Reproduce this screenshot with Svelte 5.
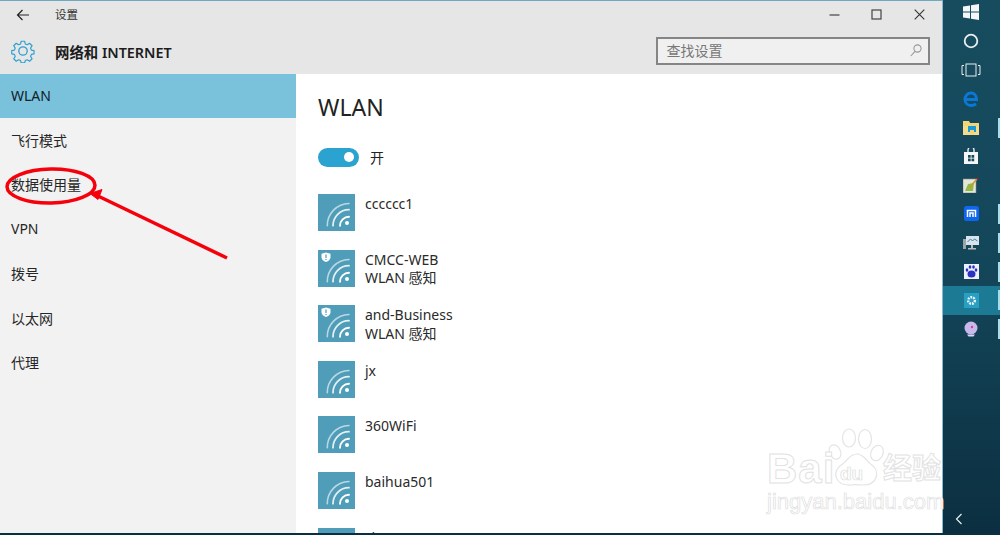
<script>
	const navItems = ['WLAN', '飞行模式', '数据使用量', 'VPN', '拨号', '以太网', '代理'];

	const networks = [
		{ name: 'cccccc1' },
		{ name: 'CMCC-WEB', sub: 'WLAN 感知', secured: true },
		{ name: 'and-Business', sub: 'WLAN 感知', secured: true },
		{ name: 'jx' },
		{ name: '360WiFi' },
		{ name: 'baihua501' },
		{ name: 'zhaoyun' }
	];

	const runningBars = [4, 7, 8, 9, 10, 11];
</script>

<div class="desktop">
	<div class="window">
		<header class="header">
			<div class="titlebar">
				<button class="back" aria-label="返回">
					<svg width="14" height="12" viewBox="0 0 14 12" fill="none" stroke="#222" stroke-width="1.2">
						<path d="M13 6H1.5M6.5 1L1.5 6l5 5" />
					</svg>
				</button>
				<span class="title">设置</span>
				<div class="controls">
					<svg width="11" height="11" viewBox="0 0 11 11" fill="none" stroke="#333" stroke-width="1.1"><path d="M0.5 6h10" /></svg>
					<svg width="11" height="11" viewBox="0 0 11 11" fill="none" stroke="#444" stroke-width="1.2"><rect x="1" y="1" width="9" height="9" /></svg>
					<svg width="11" height="11" viewBox="0 0 11 11" fill="none" stroke="#333" stroke-width="1.1"><path d="M0.7 0.7l9.6 9.6M10.3 0.7l-9.6 9.6" /></svg>
				</div>
			</div>
			<div class="subbar">
				<svg class="gear" width="24" height="24" viewBox="0 0 24 24" fill="none" stroke="#2f9fd0" stroke-width="1.3" stroke-linejoin="round">
					<path d="M10 1.3h4l.6 3 2.2.9 2.6-1.7 2.8 2.8-1.7 2.6.9 2.2 3 .6v3.600l-3 .6-.9 2.2 1.7 2.6-2.8 2.8-2.6-1.7-2.2.9-.6 2.6h-4l-.6-2.6-2.2-.9-2.6 1.7-2.8-2.8 1.7-2.6-.9-2.2-3-.6v-3.6l3-.6.9-2.2-1.7-2.6 2.8-2.8 2.6 1.7 2.2-.9z" transform="translate(1.1 1.1) scale(0.9)" />
					<circle cx="12" cy="12" r="4.2" />
				</svg>
				<span class="section">网络和 INTERNET</span>
				<div class="search">
					<span>查找设置</span>
					<svg width="12" height="13" viewBox="0 0 12 13" fill="none" stroke="#999" stroke-width="1.1">
						<circle cx="7.5" cy="4.5" r="3.6" /><path d="M5 7.3L0.8 12" />
					</svg>
				</div>
			</div>
		</header>

		<div class="body">
			<nav class="sidebar">
				{#each navItems as item, i}
					<div class="nav-item" class:active={i === 0}>{item}</div>
				{/each}
			</nav>

			<main class="content">
				<h1>WLAN</h1>
				<div class="toggle-row">
					<span class="toggle"><span class="knob"></span></span>
					<span>开</span>
				</div>
				<div class="list">
					{#each networks as net}
						<div class="network">
							<div class="net-icon">
								<svg width="37" height="37" viewBox="0 0 37 37" fill="none" stroke="#fff" stroke-linecap="round">
									<path d="M9.3 31.7A22 22 0 0 1 31 9.500" stroke-width="1.6" opacity="0.6" />
									<path d="M15 31.7A16 16 0 0 1 31 15.700" stroke-width="1.8" opacity="0.85" />
									<path d="M22 31.700A9 9 0 0 1 31 22.700" stroke-width="1.900" />
									<circle cx="29" cy="29" r="2" fill="#fff" stroke="none" />
									{#if net.secured}
										<path d="M8 2.500l4.500 1.300v3.400c0 2.400-2 3.800-4.500 4.800-2.500-1-4.500-2.400-4.500-4.800V3.800z" fill="#fff" stroke="none" />
										<path d="M8 4.500v3.500M8 9v1" stroke="#4f9db8" stroke-width="1.200" stroke-linecap="butt" />
									{/if}
								</svg>
							</div>
							<div class="net-text">
								<div>{net.name}</div>
								{#if net.sub}<div>{net.sub}</div>{/if}
							</div>
						</div>
					{/each}
				</div>
			</main>
		</div>

		<!-- annotation drawn over the screenshot -->
		<svg class="annotation" width="240" height="110" viewBox="0 0 240 110" fill="none" stroke="#f5000b">
			<ellipse cx="51" cy="26" rx="44" ry="17" stroke-width="3.500" transform="rotate(-1 51 26)" />
			<path d="M227 98L98 36" stroke-width="3.500" />
			<path d="M90 33.500l12-4-4 10z" fill="#f5000b" stroke-width="1" />
		</svg>
	</div>

	<aside class="taskbar">
		<div class="tb-icon">
			<svg width="16" height="16" viewBox="0 0 16 16" fill="#f4f6f7"><path d="M0 2.500L7 1.400V7.400H0zM8 1.200L16 0V7.400H8zM0 8.400H7V14.500L0 13.500zM8 8.400H16V16L8 14.700z" /></svg>
		</div>
		<div class="tb-icon">
			<svg width="16" height="16" viewBox="0 0 16 16" fill="none" stroke="#e8eef0" stroke-width="1.800"><circle cx="8" cy="8" r="6.300" /></svg>
		</div>
		<div class="tb-icon">
			<svg width="20" height="14" viewBox="0 0 20 14" fill="none" stroke="#e8eef0" stroke-width="1"><rect x="5" y="1" width="10" height="12" /><path d="M3 2.500H1v9h2M17 2.500h2v9h-2" /></svg>
		</div>
		<div class="tb-icon">
			<svg width="16" height="16" viewBox="0 0 16 16" fill="none" stroke="#0a78d7" stroke-width="3"><path d="M2.500 8.500h11C13.500 4.500 11 2 8 2 4.500 2 2 5 2 8.500 2 12 4.500 14.500 8 14.500c2 0 3.500-.5 5-1.500" /></svg>
		</div>
		<div class="tb-icon">
			<svg width="16" height="14" viewBox="0 0 16 14"><path d="M0 0h6l1 2h9v12H0z" fill="#f2d675" /><rect y="5" width="16" height="9" fill="#f5dc8a" /><rect x="5" y="5" width="8" height="6" fill="#1b9ad6" /><rect x="7" y="9" width="4" height="5" fill="#f2d675" /></svg>
		</div>
		<div class="tb-icon">
			<svg width="14" height="16" viewBox="0 0 14 16"><path d="M0 4h14v12H0z" fill="#f4f6f7" /><path d="M4 4V2a3 3 0 0 1 6 0v2" fill="none" stroke="#f4f6f7" stroke-width="1.300" /><path d="M4 7h2.700v2.700H4zM7.500 7h2.700v2.700H7.500zM4 10.500h2.700v2.700H4zM7.500 10.500h2.700v2.700H7.500z" fill="#164a5c" /></svg>
		</div>
		<div class="tb-icon">
			<svg width="16" height="16" viewBox="0 0 16 16"><rect y="2" width="13" height="14" fill="#e4e6d8" stroke="#888" stroke-width="0.600" /><path d="M2 14l3-7 6-1-1 8z" fill="#8dbb4a" /><path d="M6 11l8-9" stroke="#c89a30" stroke-width="1.500" /><circle cx="14.500" cy="1.500" r="1" fill="#a01c2c" /></svg>
		</div>
		<div class="tb-icon">
			<svg width="15" height="15" viewBox="0 0 15 15"><rect width="15" height="15" rx="2.500" fill="#0f67f0" /><path d="M3.500 11V4.500h8V11M6 11V7h3v4" fill="none" stroke="#fff" stroke-width="1.500" /></svg>
		</div>
		<div class="tb-icon">
			<svg width="16" height="15" viewBox="0 0 16 15"><rect x="3" y="1" width="13" height="9" fill="#d8e4ea" /><path d="M4.500 7l3-3 2 2 2-2 3 2" fill="none" stroke="#3b80b0" /><rect x="8" y="10" width="2" height="3" fill="#bbb" /><rect x="5" y="13" width="8" height="1.500" fill="#bbb" /><rect y="4" width="3" height="10" fill="#9aa5a8" /></svg>
		</div>
		<div class="tb-icon">
			<svg width="15" height="15" viewBox="0 0 15 15"><rect width="15" height="15" fill="#eef0fb" /><g fill="#2a32c4"><ellipse cx="3" cy="6" rx="1.300" ry="1.800" /><ellipse cx="6" cy="3" rx="1.300" ry="1.800" /><ellipse cx="9.500" cy="3" rx="1.300" ry="1.800" /><ellipse cx="12" cy="6" rx="1.300" ry="1.800" /><ellipse cx="7.500" cy="10" rx="4" ry="3.500" /></g></svg>
		</div>
		<div class="tb-icon active">
			<span class="tile">
				<svg width="11" height="11" viewBox="0 0 11 11" fill="none" stroke="#f1f6f8" stroke-width="2.400" stroke-dasharray="1.800 1"><circle cx="5.500" cy="5.500" r="3.300" /></svg>
			</span>
		</div>
		<div class="tb-icon">
			<svg width="14" height="16" viewBox="0 0 14 16"><circle cx="7" cy="7" r="6.500" fill="#c8b8ee" /><circle cx="8" cy="6" r="1.200" fill="#d34a6a" /><path d="M3 13.500h8L9.500 15.500h-5z" fill="#ded5f5" /></svg>
		</div>
		{#each runningBars as n}
			<span class="run-bar" style="top: {n * 28.8 + 2.4}px"></span>
		{/each}
		<svg class="chevron" width="8" height="12" viewBox="0 0 8 12" fill="none" stroke="#e8eef0" stroke-width="1.200"><path d="M6.500 1L1.500 6l5 5" /></svg>
	</aside>

	<div class="watermark">
		<svg class="paw" width="60" height="60" viewBox="0 0 60 60" fill="#fff" stroke="#e4e4e4" stroke-width="1.200">
			<ellipse cx="8" cy="24" rx="5.500" ry="7.500" transform="rotate(-25 8 24)" />
			<ellipse cx="22" cy="10" rx="6.500" ry="9" />
			<ellipse cx="38" cy="11" rx="6.500" ry="9.500" />
			<ellipse cx="50" cy="25" rx="6" ry="8" transform="rotate(25 50 25)" />
			<path d="M30 26c7 0 9 7 15 11 8 6 6 20-9 20-4 0-8-1-12 0C8 58 5 44 13 38c7-4 9-12 17-12z" />
		</svg>
		<span class="wm wm-bai">Bai</span>
		<span class="wm wm-du">du</span>
		<span class="wm wm-cn">经验</span>
		<span class="wm wm-url">jingyan.baidu.com</span>
	</div>
</div>

<style>
	:global(body) {
		margin: 0;
		overflow: hidden;
	}

	.desktop {
		position: relative;
		display: flex;
		width: 1000px;
		height: 535px;
		background: #0b2f40;
		font-family: 'Noto Sans', 'Noto Sans CJK SC', sans-serif;
		font-size: 14px;
		color: #222;
	}

	.window {
		position: relative;
		width: 942.500px;
		height: 533px;
		flex: none;
		display: flex;
		flex-direction: column;
		overflow: hidden;
		background: #fff;
		border-top: 1px solid #6fa9c2;
		border-right: 1px solid #8cb9cb;
		box-sizing: border-box;
	}

	.header {
		height: 73px;
		flex: none;
		background: #e6e6e6;
		display: flex;
		flex-direction: column;
	}

	.titlebar {
		height: 27px;
		display: flex;
		align-items: center;
		padding-left: 16px;
	}

	.back {
		display: flex;
		padding: 0;
		border: 0;
		background: none;
	}

	.title {
		margin-left: 25px;
		margin-top: -2px;
		font-size: 11.500px;
		color: #333;
	}

	.controls {
		margin-left: auto;
		width: 96px;
		margin-right: 17px;
		display: flex;
		justify-content: space-between;
	}

	.subbar {
		flex: 1;
		display: flex;
		align-items: center;
		padding: 0 12px 0 11px;
	}

	.section {
		margin-left: 20px;
		font-size: 14.400px;
		font-weight: 600;
		color: #1c1c1c;
	}

	.search {
		margin-left: auto;
		width: 274px;
		height: 28px;
		box-sizing: border-box;
		border: 2px solid #858585;
		background: #f0f0f0;
		color: #777;
		font-size: 14px;
		display: flex;
		align-items: center;
		justify-content: space-between;
		padding: 0 6px 2px 9px;
	}

	.body {
		flex: 1;
		min-height: 0;
		display: flex;
	}

	.sidebar {
		width: 296px;
		flex: none;
		background: #f2f2f2;
	}

	.nav-item {
		height: 44.400px;
		box-sizing: border-box;
		display: flex;
		align-items: center;
		padding: 0 0 1px 11px;
		color: #262626;
	}

	.nav-item.active {
		background: #7ac1dc;
		color: #10222a;
	}

	.content {
		flex: 1;
		padding-left: 22px;
	}

	h1 {
		margin: 0;
		padding-top: 16px;
		font-size: 23px;
		font-weight: 400;
		line-height: 34px;
		color: #222;
	}

	.toggle-row {
		margin-top: 23px;
		height: 20px;
		display: flex;
		align-items: center;
		gap: 11px;
	}

	.toggle {
		width: 41px;
		height: 19px;
		border-radius: 10px;
		background: #2ba3d0;
		display: flex;
		align-items: center;
		justify-content: flex-end;
		padding-right: 5px;
		box-sizing: border-box;
	}

	.knob {
		width: 10px;
		height: 10px;
		border-radius: 50%;
		background: #fff;
	}

	.list {
		margin-top: 27px;
		display: flex;
		flex-direction: column;
		gap: 18.600px;
	}

	.network {
		height: 37px;
		display: flex;
		gap: 10px;
	}

	.net-icon {
		width: 37px;
		height: 37px;
		background: #4f9db8;
		flex: none;
	}

	.net-text {
		padding-top: 1px;
		line-height: 18.500px;
		color: #2a2a2a;
	}

	.annotation {
		position: absolute;
		left: 0;
		top: 159px;
		pointer-events: none;
	}

	.watermark {
		position: absolute;
		left: 765px;
		top: 428px;
		width: 182px;
		height: 90px;
		pointer-events: none;
		color: #fff;
	}

	.paw {
		position: absolute;
		left: 62px;
		top: 0;
	}

	.wm {
		position: absolute;
		line-height: 1;
		white-space: nowrap;
		font-family: 'Liberation Sans', sans-serif;
	}

	.wm-bai {
		left: 2px;
		top: 20px;
		font-size: 42px;
		font-weight: 700;
		letter-spacing: 1px;
		-webkit-text-stroke: 1px #e2e2e2;
	}

	.wm-du {
		left: 75px;
		top: 36px;
		font-size: 19px;
		font-weight: 700;
		-webkit-text-stroke: 0.700px #dcdcdc;
	}

	.wm-cn {
		left: 118px;
		top: 24px;
		font-family: 'Noto Sans CJK SC', sans-serif;
		font-size: 29px;
		font-weight: 700;
		-webkit-text-stroke: 1px #e2e2e2;
	}

	.wm-url {
		left: 2px;
		top: 63px;
		font-size: 22px;
		-webkit-text-stroke: 0.700px #e0e0e0;
	}

	.taskbar {
		position: relative;
		flex: 1;
		background: linear-gradient(#174c5f, #14465a 50%, #0b2f40);
		display: flex;
		flex-direction: column;
	}

	.tb-icon {
		height: 28.800px;
		flex: none;
		display: flex;
		align-items: center;
		justify-content: center;
		position: relative;
		top: -2px;
	}

	.tb-icon.active {
		background: #1d7a94;
	}

	.tile {
		width: 15px;
		height: 15px;
		background: #2a9fc4;
		display: flex;
		align-items: center;
		justify-content: center;
	}

	.run-bar {
		position: absolute;
		right: 0;
		width: 2px;
		height: 20px;
		background: #a9dbe8;
	}

	.chevron {
		position: absolute;
		left: 12px;
		top: 513px;
	}
</style>
